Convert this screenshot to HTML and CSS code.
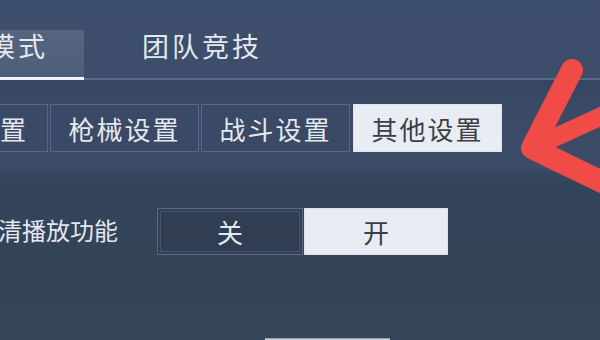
FILE: index.html
```html
<!DOCTYPE html>
<html lang="zh">
<head>
<meta charset="utf-8">
<link rel="stylesheet" href="styles.css">
</head>
<body>
<div class="screen">
  <nav class="mode-tabs">
    <div class="mode-tab active">模式</div>
    <div class="mode-tab">团队竞技</div>
  </nav>
  <div class="sub-band">
    <div class="sub-tabs">
      <div class="sub-tab first">设置</div>
      <div class="sub-tab">枪械设置</div>
      <div class="sub-tab">战斗设置</div>
      <div class="sub-tab active">其他设置</div>
    </div>
  </div>
  <div class="setting-row">
    <div class="setting-label">高清播放功能</div>
    <div class="toggle">
      <div class="toggle-btn">关</div>
      <div class="toggle-btn on">开</div>
    </div>
  </div>
  <div class="next-row">
    <div class="next-btn"></div>
  </div>
  <svg class="arrow" width="100" height="160" viewBox="500 50 100 160">
    <path d="M572 70 L532 148 L606 184" fill="none" stroke="#f04b46" stroke-width="22" stroke-linecap="round" stroke-linejoin="round"/>
    <path d="M532 148 L606 114" fill="none" stroke="#f04b46" stroke-width="18" stroke-linecap="round"/>
  </svg>
</div>
</body>
</html>
```
FILE: styles.css
```css
html, body {
  margin: 0;
  padding: 0;
}
body {
  width: 600px;
  height: 340px;
  overflow: hidden;
  font-family: "Noto Sans CJK SC", "Noto Sans", sans-serif;
  color: #e4e8ef;
}
.screen {
  position: relative;
  width: 600px;
  height: 340px;
  overflow: hidden;
  background: linear-gradient(180deg, #3e4f6d 0%, #3b4b67 45%, #33435a 55%, #354658 100%);
}
.mode-tabs {
  display: flex;
  height: 50px;
  padding-top: 30px;
  box-shadow: inset 0 -2px 0 #5a6b89;
}
.mode-tab {
  font-size: 27px;
  line-height: 27px;
  letter-spacing: 3px;
  padding-top: 2px;
  white-space: nowrap;
}
.mode-tab.active {
  width: 84px;
  height: 45px;
  box-sizing: content-box;
  text-indent: -12px;
  background: linear-gradient(180deg, #56657f 0%, #4e5e79 100%);
  border-bottom: 3px solid #f2f4f8;
  overflow: hidden;
}
.mode-tab:not(.active) {
  padding-left: 58px;
}
.sub-band {
  padding: 24px 0 19px;
  background: linear-gradient(180deg, #36465f 0%, #3a4a66 30%, #3c4c68 100%);
}
.sub-tabs {
  display: flex;
  gap: 2px;
}
.sub-tab {
  width: 147px;
  height: 46px;
  display: flex;
  align-items: center;
  justify-content: center;
  font-size: 26px;
  letter-spacing: 2px;
  background: #3a4a66;
  border: 1px solid #56688a;
  white-space: nowrap;
}
.sub-tab.first {
  width: 47px;
  border-left: none;
  justify-content: flex-end;
  padding-right: 19px;
  box-sizing: content-box;
  margin-left: -19px;
  overflow: hidden;
}
.sub-tab.active {
  background: #e9ecf3;
  border-color: #dfe3eb;
  color: #3a3e48;
  margin-left: 1px;
}
.setting-row {
  display: flex;
  align-items: center;
  height: 47px;
  margin-top: 37px;
}
.setting-label {
  width: 157px;
  font-size: 24px;
  white-space: nowrap;
  text-indent: -26px;
  overflow: hidden;
  padding-bottom: 4px;
}
.toggle {
  display: flex;
  gap: 1px;
}
.toggle-btn {
  box-sizing: border-box;
  width: 146px;
  height: 47px;
  display: flex;
  align-items: center;
  justify-content: center;
  font-size: 26px;
  background: #303d53;
  border: 1px solid #5b6a84;
  box-shadow: inset 0 0 0 2px #323f57, inset 0 0 0 3px #46546c;
}
.toggle-btn.on {
  width: 144px;
  background: #e8ebf2;
  border-color: #dde1ea;
  box-shadow: none;
  color: #3a3e48;
}
.next-row {
  display: flex;
  margin-top: 83px;
  padding-left: 265px;
}
.next-btn {
  width: 125px;
  height: 20px;
  background: #c9ced8;
  border-top: 1px solid #9aa3b2;
}
.arrow {
  position: absolute;
  left: 500px;
  top: 50px;
}
```
